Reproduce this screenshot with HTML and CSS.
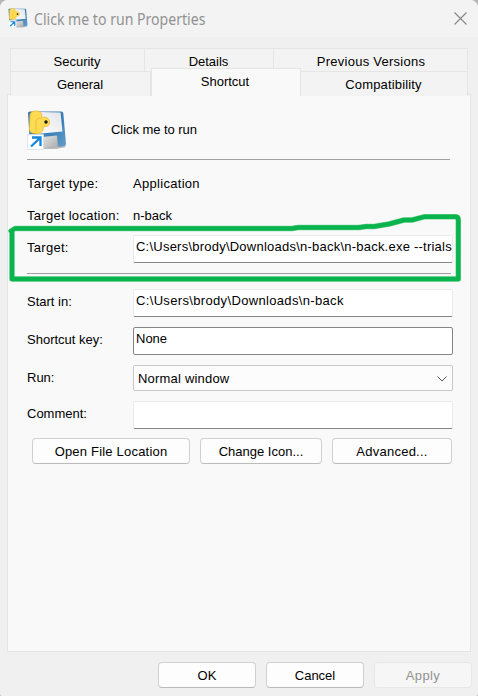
FILE: index.html
```html
<!DOCTYPE html>
<html lang="en">
<head>
<meta charset="utf-8">
<title>Click me to run Properties</title>
<link rel="stylesheet" href="styles.css">
</head>
<body>
<svg width="0" height="0" class="defs" aria-hidden="true">
  <defs>
    <linearGradient id="blue" x1="0" y1="0" x2="1" y2="1"><stop offset="0" stop-color="#3979ad"/><stop offset=".6" stop-color="#3c82b8"/><stop offset="1" stop-color="#699fca"/></linearGradient>
    <linearGradient id="paper" x1="0" y1="1" x2="1" y2="0"><stop offset="0" stop-color="#fff"/><stop offset="1" stop-color="#e4e5ea"/></linearGradient>
    <linearGradient id="metal" x1="0" y1="0" x2="1" y2="1"><stop offset="0" stop-color="#e6e6e6"/><stop offset="1" stop-color="#a9a9aa"/></linearGradient>
    <symbol id="app" viewBox="0 0 40 40">
      <path d="M12 37 37 35.500 39 37 29 39 12 39Z" fill="#b9b9b9"/>
      <path d="M1 3Q1 1.500 3 1.500L34.500 1.500Q36 1.500 36.300 3L39 34Q39 36 37 36.200L14 38 3 35Z" fill="url(#blue)"/>
      <path d="M13 2 33.500 2.500 35.500 21.500 9 24Z" fill="url(#paper)"/>
      <path d="M15 27 30 25.500 31 37 15 38.500Z" fill="url(#metal)"/>
      <path d="M3 5C3 0 14-.5 14.500 4L14.800 7.500C19 6.500 22.500 8 22.500 12 22.500 15 21.500 16 18.500 16.500L16 17C17 22 13 23.500 9 23.500 4 23.500 2 22 2.500 18Z" fill="#fddb53" stroke="#efb72e" stroke-width=".8"/>
      <path d="M9 22V12Q9 8 14.500 8" fill="none" stroke="#edb834" stroke-width=".8"/>
      <circle cx="19" cy="12" r="1.700" fill="#151515"/>
      <path d="M.5 24.500H16.500V39.500H.5Z" fill="#fff" stroke="#d3e0ea" stroke-width=".8"/>
      <path d="M4 36.500 13 28M5 27.500H13.500V36" fill="none" stroke="#1686dc" stroke-width="2.300"/>
    </symbol>
  </defs>
</svg>
<main class="dialog">
  <header class="titlebar">
    <svg class="title-icon"><use href="#app"/></svg>
    <h1>Click me to run Properties</h1>
    <svg class="close" viewBox="0 0 13 13"><path d="M.5.5 12.500 12.500M12.500.5.5 12.500"/></svg>
  </header>
  <nav class="tabs">
    <div class="tab-row back"><span class="tab">Security</span><span class="tab">Details</span><span class="tab wide">Previous Versions</span></div>
    <div class="tab-row front"><span class="tab">General</span><span class="tab active">Shortcut</span><span class="tab compat">Compatibility</span></div>
  </nav>
  <section class="panel">
    <div class="heading"><svg class="big-icon"><use href="#app"/></svg><span class="name">Click me to run</span></div>
    <div class="row type"><label>Target type:</label><span>Application</span></div>
    <div class="row location"><label>Target location:</label><span>n-back</span></div>
    <div class="row target"><label>Target:</label><div class="field path long">C:\Users\brody\Downloads\n-back\n-back.exe --trials</div></div>
    <div class="rule"></div>
    <div class="row start"><label>Start in:</label><div class="field path">C:\Users\brody\Downloads\n-back</div></div>
    <div class="row key"><label>Shortcut key:</label><div class="field outlined">None</div></div>
    <div class="row run"><label>Run:</label><div class="select"><span>Normal window</span><svg viewBox="0 0 10 6"><path d="M.5.5 5 5 9.500.5"/></svg></div></div>
    <div class="row comment"><label>Comment:</label><div class="field"></div></div>
    <div class="actions"><button class="open">Open File Location</button><button class="change">Change Icon...</button><button class="advanced">Advanced...</button></div>
  </section>
  <footer><button>OK</button><button>Cancel</button><button disabled>Apply</button></footer>
  <svg class="marker" viewBox="0 0 478 80">
    <path class="halo" d="M11 13 15 10.500H292L298 9.500H359L366 8.500H374L389 6 404 2H412L424-1.200H455Q458.300-1.200 458.300 2V61H12V13"/>
    <path d="M11 13 15 10.500H292L298 9.500H359L366 8.500H374L389 6 404 2H412L424-1.200H455Q458.300-1.200 458.300 2V61H12V13"/>
  </svg>
</main>
</body>
</html>
```
FILE: styles.css
```css
* { box-sizing: border-box; }
body { margin: 0; background: #b5b5b5; font: 13px/16px "Liberation Sans", Arial, sans-serif; color: #000; }
.defs { position: absolute; }
.dialog { position: relative; width: 478px; height: 696px; background: #f0f0f0; border-radius: 8px 8px 2px 2px; overflow: hidden; }
.titlebar { height: 37px; display: flex; align-items: center; background: #f3f3f3; padding: 0 11px 0 8px; }
.title-icon { width: 20px; height: 20px; margin: -2px 6px 0 0; }
h1 { margin: 0; font: 16px/20px "Noto Sans", "Open Sans", sans-serif; color: #929292; white-space: nowrap; transform: scaleX(.88); transform-origin: left; }
.close { width: 13px; height: 13px; margin-left: auto; }
.close path { fill: none; stroke: #858585; stroke-width: 1.1; }
.tabs { margin: 11px 10px 0; }
.tab-row { display: grid; height: 23px; }
.back { grid-template-columns: 135px 129px 194px; }
.front { grid-template-columns: 141px 150px 167px; }
.tab { border: 1px solid #e5e5e5; border-width: 1px 1px 0 0; background: #f3f3f3; text-align: center; padding: 5px 1px 0 0; }
.tab:first-child { border-left-width: 1px; }
.tab.wide { padding-left: 2px; letter-spacing: .25px; }
.compat { letter-spacing: .15px; }
.tab.active { position: relative; height: 28px; margin-top: -3px; background: #f9f9f9; border-width: 1px 1px 0 1px; padding-right: 2px; }
.panel { height: 558px; margin: 0 7px; border: 1px solid #e5e5e5; background: #f9f9f9; padding: 7px 17px 0 19px; }
.heading { width: 423px; height: 58px; border-bottom: 1px solid #a0a0a0; display: flex; padding-top: 8px; }
.big-icon { width: 40px; height: 40px; margin-right: 44px; }
.name { padding-top: 12px; letter-spacing: -.05px; }
.row { display: grid; grid-template-columns: 106px 320px; align-items: start; }
.type { margin-top: 16px; height: 32px; letter-spacing: .3px; }
.location { height: 27px; }
.location label, .target label { letter-spacing: .28px; }
.target { height: 38px; }
label { padding-top: 5px; }
.type label, .location label { padding-top: 0; }
.field { height: 28px; border: 1px solid #ebebeb; border-bottom-color: #858585; background: #fff; border-radius: 2px; padding: 3px 0 0 2px; overflow: hidden; white-space: nowrap; }
.path { letter-spacing: .34px; }
.long { letter-spacing: .23px; }
.rule { width: 424px; height: 16px; border-top: 1px solid #a0a0a0; }
.start { height: 38px; }
.key { height: 38px; }
.outlined { border-color: #858585; }
.run { height: 36px; }
.select { height: 26px; border: 1px solid #c8c8c8; border-radius: 2px; background: #fcfcfc; display: flex; align-items: center; justify-content: space-between; padding: 1px 5px 0 4px; letter-spacing: .2px; }
.select svg { width: 10px; height: 6px; }
.select path { fill: none; stroke: #555; }
.comment { height: 37px; }
.actions { display: flex; gap: 10px; padding-left: 5px; }
button { width: 98px; height: 26px; padding: 2px 0 0; border: 1px solid #d0d0d0; border-bottom-color: #bbb; border-radius: 4px; background: #fdfdfd; color: #000; font: inherit; }
.open { width: 158px; letter-spacing: .2px; }
.change { width: 122px; }
.advanced { width: 120px; letter-spacing: .25px; }
footer { display: flex; justify-content: flex-end; gap: 10px; margin-top: 10px; padding-right: 6px; }
button:disabled { color: #929292; background: #f6f6f6; border-color: #e7e7e7; letter-spacing: .4px; }
.marker { position: absolute; left: 0; top: 218px; width: 478px; height: 80px; pointer-events: none; overflow: visible; }
.marker path { fill: none; stroke: #09b34e; stroke-width: 4.4; stroke-linejoin: round; stroke-linecap: round; }
.marker .halo { stroke: #75d596; stroke-width: 5.5; }
```
